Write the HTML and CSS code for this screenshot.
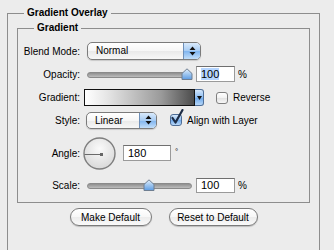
FILE: index.html
```html
<!DOCTYPE html>
<html lang="en">
<head>
    <meta charset="UTF-8">
    <title>Gradient Overlay</title>
    <link rel="stylesheet" href="styles.css">
</head>
<body>
    <fieldset class="group">
        <legend class="group-title">Gradient Overlay</legend>

        <fieldset class="box">
            <legend class="box-title">Gradient</legend>

            <div class="row row-blend">
                <span class="lbl">Blend Mode:</span>
                <div class="popup popup-blend">
                    <span class="popup-text">Normal</span>
                    <span class="popup-arrows">
                        <svg width="7" height="10" viewBox="0 0 7 10"><path d="M0.5 4 L3.5 0.5 L6.5 4 Z M0.5 6 L3.5 9.5 L6.5 6 Z" fill="#111"/></svg>
                    </span>
                </div>
            </div>

            <div class="row row-opacity">
                <span class="lbl">Opacity:</span>
                <div class="slider">
                    <div class="track"></div>
                    <svg class="thumb" style="left: 94px" width="12" height="12" viewBox="0 0 12 12">
                        <defs>
                            <linearGradient id="thumbA" x1="0" y1="0" x2="0" y2="1">
                                <stop offset="0" stop-color="#e4f0fc"/>
                                <stop offset="0.5" stop-color="#9fc6ef"/>
                                <stop offset="1" stop-color="#5d9ce3"/>
                            </linearGradient>
                        </defs>
                        <path d="M1 11.5 V5.5 L6 0.8 L11 5.5 V11.5 Z" fill="url(#thumbA)" stroke="#6f7f92" stroke-width="1"/>
                    </svg>
                </div>
                <div class="field field-pct"><span class="sel">100</span></div>
                <span class="unit">%</span>
            </div>

            <div class="row row-gradient">
                <span class="lbl">Gradient:</span>
                <div class="grad">
                    <div class="grad-bar"></div>
                    <div class="grad-arrow">
                        <svg width="5" height="4" viewBox="0 0 5 4"><path d="M0 0 H5 L2.5 4 Z" fill="#111"/></svg>
                    </div>
                </div>
                <span class="check check-reverse"></span>
                <span class="check-label">Reverse</span>
            </div>

            <div class="row row-style">
                <span class="lbl">Style:</span>
                <div class="popup popup-style">
                    <span class="popup-text">Linear</span>
                    <span class="popup-arrows">
                        <svg width="7" height="10" viewBox="0 0 7 10"><path d="M0.5 4 L3.5 0.5 L6.5 4 Z M0.5 6 L3.5 9.5 L6.5 6 Z" fill="#111"/></svg>
                    </span>
                </div>
                <span class="check check-on check-align">
                    <svg class="tick" width="14" height="16" viewBox="0 0 14 16"><path d="M2.5 9 L5.5 13.5 L12.5 1" fill="none" stroke="#1d2c45" stroke-width="2.2" stroke-linecap="round" stroke-linejoin="round"/></svg>
                </span>
                <span class="check-label">Align with Layer</span>
            </div>

            <div class="row row-angle">
                <span class="lbl">Angle:</span>
                <svg class="dial" width="33" height="33" viewBox="0 0 33 33">
                    <defs>
                        <radialGradient id="dialFill" cx="0.5" cy="0.35" r="0.7">
                            <stop offset="0" stop-color="#fafafa"/>
                            <stop offset="1" stop-color="#d6d6d6"/>
                        </radialGradient>
                    </defs>
                    <circle cx="16.5" cy="16.5" r="15.5" fill="url(#dialFill)" stroke="#7e7e7e" stroke-width="1.4"/>
                    <line x1="1.5" y1="17.5" x2="18" y2="17.5" stroke="#6a6a6a" stroke-width="1"/>
                    <rect x="17" y="16" width="3" height="3" fill="#666"/>
                </svg>
                <div class="field field-angle">180</div>
                <span class="deg">°</span>
            </div>

            <div class="row row-scale">
                <span class="lbl">Scale:</span>
                <div class="slider">
                    <div class="track"></div>
                    <svg class="thumb" style="left: 56px" width="12" height="12" viewBox="0 0 12 12">
                        <defs>
                            <linearGradient id="thumbB" x1="0" y1="0" x2="0" y2="1">
                                <stop offset="0" stop-color="#e4f0fc"/>
                                <stop offset="0.5" stop-color="#9fc6ef"/>
                                <stop offset="1" stop-color="#5d9ce3"/>
                            </linearGradient>
                        </defs>
                        <path d="M1 11.5 V5.5 L6 0.8 L11 5.5 V11.5 Z" fill="url(#thumbB)" stroke="#6f7f92" stroke-width="1"/>
                    </svg>
                </div>
                <div class="field field-pct">100</div>
                <span class="unit">%</span>
            </div>
        </fieldset>

        <div class="buttons">
            <button class="btn btn-make">Make Default</button>
            <button class="btn btn-reset">Reset to Default</button>
        </div>
    </fieldset>
</body>
</html>
```

FILE: styles.css
```css
body {
    margin: 0;
    height: 250px;
    overflow: hidden;
    background-color: #ececec;
    font-family: "Liberation Sans", Arial, sans-serif;
    font-size: 10px;
    color: #000;
}

/* fieldsets */

.group {
    box-sizing: border-box;
    width: 313px;
    margin: 7px 0 0 7px;
    padding: 0 9px 40px 9px;
    border: 1px solid #8d8d8d;
}

.box {
    margin: 3px 0 0 0;
    padding: 8px 0 9px 0;
    border: 1px solid #8d8d8d;
}

.group-title, .box-title {
    font-weight: bold;
    line-height: 12px;
    padding: 0 3px;
}

.group-title {
    margin-left: 7px;
}

.box-title {
    margin-left: 16px;
}

/* rows */

.row {
    display: flex;
    align-items: center;
}

.lbl {
    flex: none;
    width: 62px;
    text-align: right;
}

.row-blend { height: 18px; }
.row-opacity { height: 16px; margin-top: 6px; }
.row-gradient { height: 17px; margin-top: 7px; }
.row-style { height: 16px; margin-top: 6px; }
.row-angle { height: 32px; margin-top: 9px; }
.row-scale { height: 16px; margin-top: 8px; }

/* popup menus */

.popup {
    box-sizing: border-box;
    display: flex;
    border: 1px solid #7b7b7b;
    border-radius: 5px;
    overflow: hidden;
    background: linear-gradient(#ffffff, #f6f6f6 50%, #e9e9e9 51%, #f7f7f7);
    box-shadow: 0 1px 1px rgba(0, 0, 0, 0.15);
}

.popup-blend {
    width: 114px;
    height: 18px;
    margin-left: 7px;
}

.popup-style {
    width: 71px;
    height: 17px;
    margin-left: 6px;
}

.popup-text {
    flex: 1;
    padding-left: 8px;
    line-height: 16px;
}

.popup-style .popup-text {
    line-height: 15px;
}

.popup-arrows {
    flex: none;
    width: 16px;
    display: flex;
    align-items: center;
    justify-content: center;
    border-left: 1px solid #6e8fb8;
    background: linear-gradient(#d9eafc, #a6cbf3 50%, #7fb4ef 51%, #c2def9);
}

/* sliders */

.slider {
    position: relative;
    width: 105px;
    height: 16px;
    margin-left: 7px;
}

.track {
    position: relative;
    top: 6px;
    height: 4px;
    border: 1px solid #8a8a8a;
    border-radius: 3px;
    background: linear-gradient(#8f8f8f, #bdbdbd);
}

.thumb {
    position: absolute;
    top: 2px;
}

/* text fields */

.field {
    box-sizing: border-box;
    height: 16px;
    padding-left: 4px;
    border: 1px solid #9a9a9a;
    border-top-color: #6f6f6f;
    background-color: #fff;
    font-size: 11px;
    line-height: 14px;
}

.field-pct {
    width: 39px;
    margin-left: 4px;
}

.row-scale .field-pct {
    height: 15px;
    line-height: 13px;
}

.field-angle {
    width: 48px;
    height: 16px;
    margin-left: 7px;
}

.sel {
    background-color: #b5d5ff;
}

.unit {
    margin-left: 3px;
}

.deg {
    align-self: flex-start;
    margin: 10px 0 0 4px;
    font-size: 8px;
}

/* gradient picker */

.grad {
    display: flex;
    height: 17px;
    margin-left: 4px;
}

.grad-bar {
    box-sizing: border-box;
    width: 111px;
    border: 1px solid #111;
    background: linear-gradient(to right, #ffffff, #e6e6e6 20%, #9a9a9a 70%, #4c4c4c);
}

.grad-arrow {
    box-sizing: border-box;
    width: 9px;
    display: flex;
    align-items: center;
    justify-content: center;
    border: 1px solid #4f6f98;
    border-left: none;
    border-radius: 0 3px 3px 0;
    background: linear-gradient(#d3e6fb, #8bbcf1 50%, #6aa6ea 51%, #b7d7f8);
}

/* checkboxes */

.check {
    position: relative;
    box-sizing: border-box;
    flex: none;
    width: 12px;
    height: 12px;
    border: 1px solid #7f7f7f;
    border-radius: 3px;
    background: linear-gradient(#ffffff, #f1f1f1 50%, #e2e2e2 51%, #f6f6f6);
}

.check-reverse {
    margin-left: 12px;
}

.check-align {
    margin-left: 13px;
}

.check-on {
    border-color: #4e6d96;
    background: linear-gradient(#d6e8fb, #93c0f1 50%, #6ea9eb 51%, #b9d8f9);
}

.tick {
    position: absolute;
    left: -1px;
    top: -6px;
}

.check-label {
    margin-left: 5px;
}

/* angle dial */

.dial {
    flex: none;
    margin-left: 3px;
}

/* buttons */

.buttons {
    display: flex;
    justify-content: center;
    gap: 17px;
    margin-top: 5px;
}

.btn {
    height: 18px;
    padding: 0;
    border: 1px solid #7a7a7a;
    border-radius: 9px;
    background: linear-gradient(#ffffff, #f7f7f7 50%, #ececec 51%, #fafafa);
    box-shadow: 0 1px 1px rgba(0, 0, 0, 0.2);
    font-family: "Liberation Sans", Arial, sans-serif;
    font-size: 10px;
    color: #000;
}

.btn-make {
    width: 82px;
}

.btn-reset {
    width: 89px;
}
```
